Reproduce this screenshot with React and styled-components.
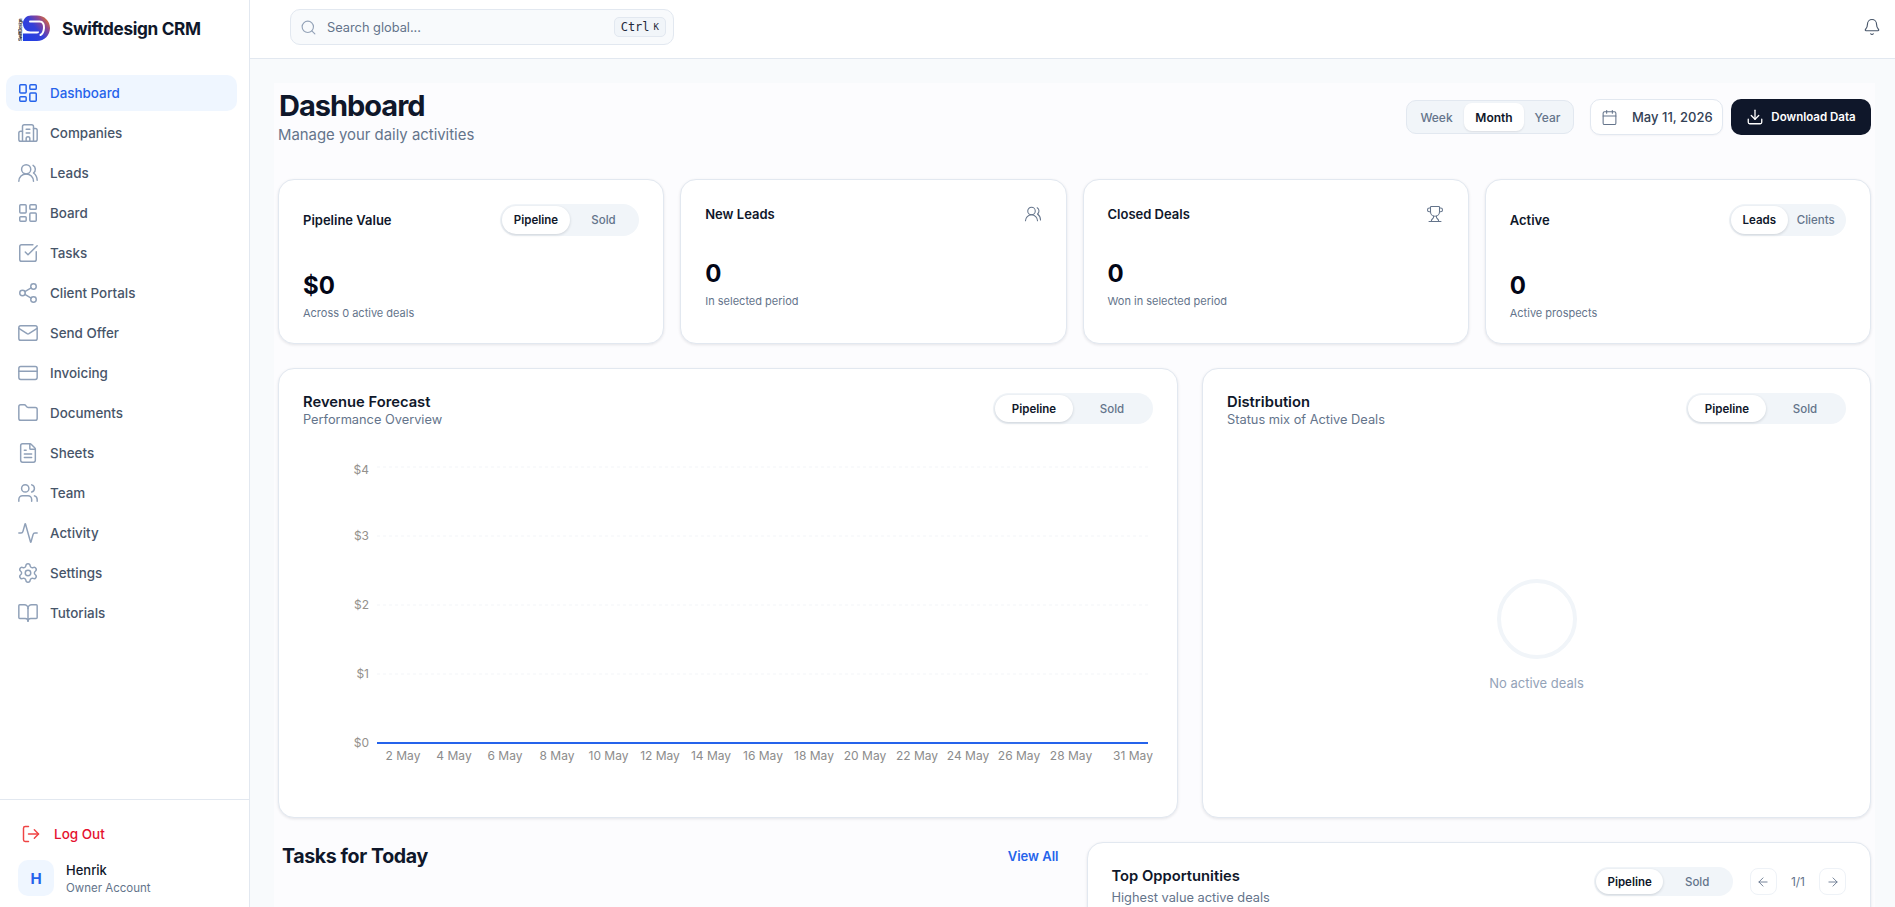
import React from 'react';
import styled, { createGlobalStyle } from 'styled-components';
import {
  LayoutDashboard, Building2, Users, UsersRound, SquareCheckBig, Share2, Mail, CreditCard, Folder,
  FileText, Activity, Settings, BookOpen, LogOut, Search, Bell, Calendar, Download, Trophy,
  ArrowLeft, ArrowRight,
} from 'lucide-react';

const Global = createGlobalStyle`
  html, body { margin: 0; padding: 0; height: 100%; overflow: hidden; }
  body { font-family: Inter, "Noto Sans", sans-serif; color: #0f172a; background: #fff; }
  * { box-sizing: border-box; }
  #root { height: 100%; }
`;

const Shell = styled.div`display: flex; height: 907px; overflow: hidden;`;
const Sidebar = styled.aside`
  width: 250px; flex: none; display: flex; flex-direction: column;
  background: #fff; border-right: 1px solid #e2e8f0;
`;
const Brand = styled.div`
  height: 57px; display: flex; align-items: center; gap: 12px; padding-left: 18px;
  font-size: 17.2px; font-weight: 700; letter-spacing: -0.02em; color: #0f172a;
`;
const Nav = styled.nav`
  flex: 1; display: flex; flex-direction: column; gap: 4px; padding: 18px 12px 0 6px;
`;
const NavItem = styled.a`
  height: 36px; display: flex; align-items: center; gap: 11px; padding-left: 11px; border-radius: 10px;
  font-size: 13.4px; font-weight: 500;
  color: ${p => (p.$active ? '#2563eb' : '#475569')};
  background: ${p => (p.$active ? '#eff6ff' : 'transparent')};
  svg { color: ${p => (p.$active ? '#2563eb' : '#8fa0b8')}; flex: none; }
`;
const SideFooter = styled.div`
  border-top: 1px solid #e2e8f0; padding: 16px 18px 11px; display: flex; flex-direction: column; gap: 8px;
`;
const LogoutRow = styled.a`
  height: 36px; display: flex; align-items: center; gap: 13px; padding-left: 3px;
  font-size: 13.5px; font-weight: 500; color: #e5102f;
  svg { color: #ef4444; }
`;
const UserRow = styled.div`display: flex; align-items: flex-start; gap: 12px; height: 36px;`;
const Avatar = styled.div`
  width: 36px; height: 36px; border-radius: 10px; background: #eff6ff; color: #2563eb;
  display: grid; place-items: center; font-size: 15px; font-weight: 700;
`;
const UserText = styled.div`padding-top: 1px; height: 36px;`;
const UserName = styled.div`font-size: 13px; font-weight: 500; color: #0f172a; line-height: 18px;`;
const UserRole = styled.div`font-size: 11.5px; color: #64748b; line-height: 19px;`;

const Column = styled.div`flex: 1; min-width: 0; display: flex; flex-direction: column;`;
const Topbar = styled.header`
  height: 59px; flex: none; display: flex; align-items: center; justify-content: space-between;
  padding: 0 14px 4px 40px; background: #fff; border-bottom: 1px solid #e2e8f0;
`;
const SearchBox = styled.label`
  width: 384px; height: 36px; display: flex; align-items: center; gap: 8px; padding: 0 7px 0 9px;
  background: #f8fafc; border: 1px solid #e2e8f0; border-radius: 10px;
  svg { color: #94a3b8; flex: none; }
`;
const SearchInput = styled.input`
  flex: 1; min-width: 0; border: 0; outline: 0; background: transparent; font: inherit; font-size: 12.8px;
  color: #0f172a;
  &::placeholder { color: #64748b; opacity: 1; }
`;
const Kbd = styled.kbd`
  height: 20px; padding: 0 6px; display: flex; align-items: center; gap: 4px; border-radius: 5px;
  background: #f1f5f9; border: 1px solid #e2e8f0; color: #1e293b;
  font-family: "DejaVu Sans Mono", "Liberation Mono", monospace; font-size: 12px; font-weight: 500;
`;
const KbdSmall = styled.span`font-size: 9px;`;
const IconButton = styled.button`
  border: 0; background: none; padding: 0; color: #475569; display: flex;
`;
const MainArea = styled.main`
  flex: 1; min-height: 0; overflow: hidden; background: #f8fafc; padding: 24px 20px 0 24px;
`;
const Inner = styled.div`
  background: #fcfcfe; padding: 5px 4px 24px; display: flex; flex-direction: column; gap: 24px;
`;
const PageHead = styled.div`
  display: flex; align-items: center; justify-content: space-between; margin-bottom: 9px;
`;
const PageTitle = styled.h1`
  margin: 0; padding-left: 1px; font-size: 29px; line-height: 36px; font-weight: 700; letter-spacing: -0.035em; color: #0f172a;
`;
const PageSub = styled.p`margin: 0; font-size: 14.9px; line-height: 22px; color: #64748b;`;
const HeadActions = styled.div`display: flex; align-items: center; gap: 8px;`;
const PeriodTabs = styled.div`
  display: flex; height: 34px; padding: 2px; margin-right: 8px; width: 168px; background: #f1f5f9;
  border: 1px solid #e2e8f0; border-radius: 10px;
`;
const PeriodTab = styled.button`
  flex: 0 0 ${p => p.$w}px; border: 0; border-radius: 8px; font: inherit; font-size: 12px; padding: 0;
  font-weight: ${p => (p.$active ? 600 : 500)};
  color: ${p => (p.$active ? '#0f172a' : '#64748b')};
  background: ${p => (p.$active ? '#fff' : 'transparent')};
  box-shadow: ${p => (p.$active ? '0 1px 2px rgba(15,23,42,.1)' : 'none')};
`;
const DateButton = styled.button`
  width: 133px; height: 36px; display: flex; align-items: center; gap: 14px; padding: 0 0 0 10px; background: #fff;
  border: 1px solid #e2e8f0; border-radius: 10px; font: inherit; font-size: 13px; font-weight: 500; color: #334155;
  box-shadow: 0 1px 2px rgba(15,23,42,.04);
  svg { color: #64748b; flex: none; }
`;
const DownloadButton = styled.button`
  width: 140px; height: 36px; display: flex; align-items: center; justify-content: center; gap: 7px; border: 0;
  border-radius: 10px; background: #0f172a; color: #fff; font: inherit; font-size: 11.5px; font-weight: 600;
`;

const StatGrid = styled.section`display: grid; grid-template-columns: repeat(4, 1fr); gap: 16px;`;
const Card = styled.div`
  background: #fff; border: 1px solid #e2e8f0; border-radius: 16px; padding: 24px;
  box-shadow: 0 1px 3px rgba(15,23,42,.1);
`;
const StatCard = styled(Card)`height: 165px;`;
const StatHead = styled.div`display: flex; align-items: center; justify-content: space-between; height: ${p => (p.$tall ? 32 : 20)}px; margin-bottom: 34px; svg { color: #64748b; }`;
const StatTitle = styled.div`font-size: 13px; font-weight: 600; color: #0f172a;`;
const StatValue = styled.div`font-size: 24px; line-height: 32px; font-weight: 700; color: #020617;`;
const StatNote = styled.div`font-size: 11px; line-height: 16px; margin-top: 3px; color: #64748b;`;

const Toggle = styled.div`
  display: grid; grid-template-columns: 1fr 1fr; padding: 2px; border-radius: 999px; background: #f1f5f9;
  width: ${p => p.$w}px; height: ${p => p.$h}px;
`;
const ToggleBtn = styled.button`
  border: 0; padding: 0; border-radius: 999px; font: inherit; font-size: 11.5px;
  font-weight: ${p => (p.$active ? 600 : 500)};
  color: ${p => (p.$active ? '#0f172a' : '#64748b')};
  background: ${p => (p.$active ? '#fff' : 'transparent')};
  box-shadow: ${p => (p.$active ? '0 1px 3px rgba(15,23,42,.16)' : 'none')};
`;

const ChartGrid = styled.section`display: grid; grid-template-columns: 900px 1fr; gap: 24px;`;
const ChartCard = styled(Card)`height: 450px; display: flex; flex-direction: column;`;
const PanelHead = styled.div`display: flex; align-items: flex-start; justify-content: space-between;`;
const PanelTitle = styled.div`font-size: 14.75px; line-height: 19px; font-weight: 600; color: #0f172a;`;
const PanelSub = styled.div`font-size: 12.8px; line-height: 15px; color: #64748b;`;
const ChartSvg = styled.svg`display: block; width: 850px; height: 340px; margin-top: 23px; flex: none;`;
const Empty = styled.div`
  flex: 1; display: flex; flex-direction: column; align-items: center; padding-top: 152px; gap: 16px;
  font-size: 13px; color: #94a3b8;
`;
const Ring = styled.div`width: 80px; height: 80px; border-radius: 50%; border: 4px solid #f1f5f9;`;

const BottomGrid = styled.section`display: grid; grid-template-columns: 1fr 1fr; gap: 24px;`;
const TasksHead = styled.div`display: flex; align-items: center; justify-content: space-between; padding: 0 4px; height: 28px;`;
const TasksTitle = styled.h2`margin: 0; font-size: 19.6px; font-weight: 700; letter-spacing: -0.02em; color: #0f172a;`;
const ViewAll = styled.a`font-size: 13px; font-weight: 600; color: #2563eb;`;
const OppCard = styled(Card)`min-height: 200px;`;
const OppControls = styled.div`display: flex; align-items: center; gap: 17px;`;
const Pager = styled.div`display: flex; align-items: center; gap: 14px; font-size: 12px; color: #64748b;`;
const PagerBtn = styled.button`
  width: 27px; height: 27px; display: grid; place-items: center; padding: 0; background: #fff;
  border: 1px solid #eef2f7; border-radius: 8px; color: #64748b;
`;
const OppTitle = styled(PanelTitle)`line-height: 18px; margin-bottom: 5px;`;

const Logo = () => (
  <svg width="32" height="27" viewBox="0 0 32 27" fill="none" aria-hidden="true">
    <defs>
      <linearGradient id="lg" x1="5" y1="24" x2="31" y2="3" gradientUnits="userSpaceOnUse">
        <stop offset="0" stopColor="#1d3fe6" />
        <stop offset="0.5" stopColor="#3540d8" />
        <stop offset="0.75" stopColor="#8a4596" />
        <stop offset="1" stopColor="#f07a1e" />
      </linearGradient>
    </defs>
    <text transform="translate(3.6 26) rotate(-90)" fontSize="4.4" fontWeight="700" fill="#333" fontFamily="Inter">SwiftDesign</text>
    <path d="M13 .5H19C26.5.5 32 6 32 13S26.5 26 19 26H5V18.5H19C20.5 18.5 21 17.5 21 16.5H12.5C8 16.5 5 13 5 8.5C5 4 8.5 .5 13 .5Z" fill="url(#lg)" />
    <path d="M12 6.5H21.5C25 6.5 26.3 9.5 26 13C25.7 16.5 24.5 19 22.5 20" stroke="#fff" strokeWidth="2" strokeLinecap="round" />
  </svg>
);

const navItems = [
  ['Dashboard', LayoutDashboard], ['Companies', Building2], ['Leads', UsersRound], ['Board', LayoutDashboard],
  ['Tasks', SquareCheckBig], ['Client Portals', Share2], ['Send Offer', Mail], ['Invoicing', CreditCard],
  ['Documents', Folder], ['Sheets', FileText], ['Team', Users], ['Activity', Activity], ['Settings', Settings],
  ['Tutorials', BookOpen],
];

const xTicks = [
  ['2 May', 100], ['4 May', 151], ['6 May', 202], ['8 May', 254], ['10 May', 305.5], ['12 May', 357], ['14 May', 408],
  ['16 May', 460], ['18 May', 511], ['20 May', 562], ['22 May', 614], ['24 May', 665], ['26 May', 716], ['28 May', 768], ['31 May', 830],
];
const yTicks = [['$4', 17, 20], ['$3', 86, 86], ['$2', 155, 155], ['$1', 224, 224]];

const PillToggle = ({ w, h, a, b }) => (
  <Toggle $w={w} $h={h}>
    <ToggleBtn $active>{a}</ToggleBtn>
    <ToggleBtn>{b}</ToggleBtn>
  </Toggle>
);

const Chart = () => (
  <ChartSvg viewBox="0 0 850 340" fontFamily="Inter, sans-serif" fontSize="12">
    {yTicks.map(([t, y, ly]) => (
      <g key={t}>
        <line x1="74" x2="845" y1={y} y2={y} stroke="#f3f5f8" strokeDasharray="3 3" />
        <text x="66" y={ly} dy="4" textAnchor="end" fill="#94918c">{t}</text>
      </g>
    ))}
    <text x="66" y="293" dy="4" textAnchor="end" fill="#94918c">$0</text>
    <line x1="74" x2="845" y1="293" y2="293" stroke="#2563eb" strokeWidth="2" />
    {xTicks.map(([t, x]) => (
      <text key={t} x={x} y="310" textAnchor="middle" fill="#8c8c8c">{t}</text>
    ))}
  </ChartSvg>
);

export default function App() {
  return (
    <Shell>
      <Global />
      <Sidebar>
        <Brand><Logo />Swiftdesign CRM</Brand>
        <Nav>
          {navItems.map(([label, Icon], i) => (
            <NavItem key={label} $active={i === 0}><Icon size={22} strokeWidth={1.6} />{label}</NavItem>
          ))}
        </Nav>
        <SideFooter>
          <LogoutRow><LogOut size={20} strokeWidth={1.75} />Log Out</LogoutRow>
          <UserRow>
            <Avatar>H</Avatar>
            <UserText>
              <UserName>Henrik</UserName>
              <UserRole>Owner Account</UserRole>
            </UserText>
          </UserRow>
        </SideFooter>
      </Sidebar>
      <Column>
        <Topbar>
          <SearchBox>
            <Search size={17} strokeWidth={1.6} />
            <SearchInput placeholder="Search global..." />
            <Kbd>Ctrl<KbdSmall>K</KbdSmall></Kbd>
          </SearchBox>
          <IconButton><Bell size={18} strokeWidth={1.5} /></IconButton>
        </Topbar>
        <MainArea>
          <Inner>
            <PageHead>
              <div>
                <PageTitle>Dashboard</PageTitle>
                <PageSub>Manage your daily activities</PageSub>
              </div>
              <HeadActions>
                <PeriodTabs>
                  <PeriodTab $w={55}>Week</PeriodTab>
                  <PeriodTab $w={60} $active>Month</PeriodTab>
                  <PeriodTab $w={47}>Year</PeriodTab>
                </PeriodTabs>
                <DateButton><Calendar size={17} strokeWidth={1.5} />May 11, 2026</DateButton>
                <DownloadButton><Download size={18} strokeWidth={1.75} />Download Data</DownloadButton>
              </HeadActions>
            </PageHead>
            <StatGrid>
              <StatCard>
                <StatHead $tall>
                  <StatTitle>Pipeline Value</StatTitle>
                  <PillToggle w={139} h={32} a="Pipeline" b="Sold" />
                </StatHead>
                <StatValue>$0</StatValue>
                <StatNote>Across 0 active deals</StatNote>
              </StatCard>
              <StatCard>
                <StatHead>
                  <StatTitle>New Leads</StatTitle>
                  <UsersRound size={18} strokeWidth={1.4} />
                </StatHead>
                <StatValue>0</StatValue>
                <StatNote>In selected period</StatNote>
              </StatCard>
              <StatCard>
                <StatHead>
                  <StatTitle>Closed Deals</StatTitle>
                  <Trophy size={18} strokeWidth={1.4} />
                </StatHead>
                <StatValue>0</StatValue>
                <StatNote>Won in selected period</StatNote>
              </StatCard>
              <StatCard>
                <StatHead $tall>
                  <StatTitle>Active</StatTitle>
                  <PillToggle w={117} h={32} a="Leads" b="Clients" />
                </StatHead>
                <StatValue>0</StatValue>
                <StatNote>Active prospects</StatNote>
              </StatCard>
            </StatGrid>
            <ChartGrid>
              <ChartCard>
                <PanelHead>
                  <div>
                    <PanelTitle>Revenue Forecast</PanelTitle>
                    <PanelSub>Performance Overview</PanelSub>
                  </div>
                  <PillToggle w={160} h={31} a="Pipeline" b="Sold" />
                </PanelHead>
                <Chart />
              </ChartCard>
              <ChartCard>
                <PanelHead>
                  <div>
                    <PanelTitle>Distribution</PanelTitle>
                    <PanelSub>Status mix of Active Deals</PanelSub>
                  </div>
                  <PillToggle w={160} h={31} a="Pipeline" b="Sold" />
                </PanelHead>
                <Empty>
                  <Ring />
                  No active deals
                </Empty>
              </ChartCard>
            </ChartGrid>
            <BottomGrid>
              <TasksHead>
                <TasksTitle>Tasks for Today</TasksTitle>
                <ViewAll>View All</ViewAll>
              </TasksHead>
              <OppCard>
                <PanelHead>
                  <div>
                    <OppTitle>Top Opportunities</OppTitle>
                    <PanelSub>Highest value active deals</PanelSub>
                  </div>
                  <OppControls>
                    <PillToggle w={139} h={29} a="Pipeline" b="Sold" />
                    <Pager>
                      <PagerBtn><ArrowLeft size={14} strokeWidth={1.5} /></PagerBtn>
                      1/1
                      <PagerBtn><ArrowRight size={14} strokeWidth={1.5} /></PagerBtn>
                    </Pager>
                  </OppControls>
                </PanelHead>
              </OppCard>
            </BottomGrid>
          </Inner>
        </MainArea>
      </Column>
    </Shell>
  );
}
